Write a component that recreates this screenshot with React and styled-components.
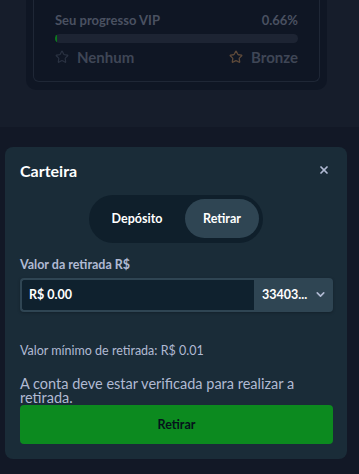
import React from 'react';
import styled, { createGlobalStyle } from 'styled-components';
import { Star, X, ChevronDown } from 'lucide-react';

const GlobalStyle = createGlobalStyle`
  html, body {
    margin: 0;
    padding: 0;
    background: #121826;
  }
  * {
    box-sizing: border-box;
  }
  body {
    font-family: Lato, "Noto Sans", sans-serif;
  }
`;

const Page = styled.div`
  width: 359px;
  height: 474px;
  overflow: hidden;
  position: relative;
  background: #121826;
`;

const TopArea = styled.div`
  height: 127px;
  background: #161d2b;
  padding-left: 26px;
`;

const VipCard = styled.div`
  width: 301px;
  background: #0f1624;
  border-radius: 0 0 10px 10px;
  padding: 0 7px 8px;
`;

const VipInner = styled.div`
  border: 1px solid #1f2736;
  border-top: none;
  border-radius: 0 0 6px 6px;
  padding: 13px 21px 15px;
  display: flex;
  flex-direction: column;
`;

const VipRow = styled.div`
  display: flex;
  justify-content: space-between;
  align-items: center;
  font-weight: 700;
  color: #4a5161;
  font-size: ${(p) => (p.big ? '15px' : '13px')};
  line-height: ${(p) => (p.big ? '18px' : '14px')};
`;

const Tier = styled.span`
  display: flex;
  align-items: center;
  gap: 8px;
  color: #3f4656;
`;

const Bar = styled.div`
  height: 9px;
  border-radius: 5px;
  background: #1d2433;
  margin: 7px 0 5px;
  overflow: hidden;
`;

const BarFill = styled.div`
  height: 100%;
  background: #0b7a1c;
`;

const Modal = styled.div`
  margin: 20px 0 0 5px;
  width: 342px;
  height: 312px;
  background: #1a2c38;
  border-radius: 8px;
  padding: 14px 14px 15px 15px;
  display: flex;
  flex-direction: column;
`;

const Header = styled.div`
  display: flex;
  justify-content: space-between;
  align-items: center;
  height: 18px;
`;

const Title = styled.h2`
  margin: 0;
  font-size: 16px;
  font-weight: 700;
  color: #ffffff;
`;

const Close = styled.button`
  background: none;
  border: none;
  padding: 0;
  margin-right: 3px;
  color: #b1bad3;
  display: flex;
`;

const Toggle = styled.div`
  align-self: center;
  margin: 16px 0 0 -1px;
  height: 48px;
  padding: 4px;
  gap: 4px;
  display: flex;
  align-items: center;
  background: #0f1f2b;
  border-radius: 24px;
`;

const Tab = styled.button`
  height: 39px;
  width: ${(p) => p.w}px;
  border: none;
  border-radius: 20px;
  background: ${(p) => (p.active ? '#2f4553' : 'transparent')};
  color: #ffffff;
  font-family: inherit;
  font-weight: 700;
  font-size: 12.5px;
`;

const Label = styled.div`
  margin-top: 14px;
  font-size: 12.5px;
  line-height: 16px;
  font-weight: 700;
  color: #b1bad3;
`;

const InputRow = styled.div`
  margin-top: 5px;
  display: flex;
  height: 35px;
  border-radius: 4px;
  box-shadow: 0 1px 3px rgba(0, 0, 0, 0.25);
`;

const AmountInput = styled.div`
  width: 234px;
  background: #0f212e;
  border: 2px solid #2f4553;
  border-right: none;
  border-radius: 4px 0 0 4px;
  padding-left: 7px;
  display: flex;
  align-items: center;
  color: #ffffff;
  font-weight: 700;
  font-size: 12.5px;
`;

const Select = styled.div`
  flex: 1;
  background: #2f4553;
  border-radius: 0 4px 4px 0;
  padding: 0 6px 0 8px;
  display: flex;
  align-items: center;
  justify-content: space-between;
  color: #ffffff;
  font-weight: 700;
  font-size: 12.5px;
  svg {
    color: #b1bad3;
  }
`;

const Note = styled.div`
  margin-top: ${(p) => p.mt}px;
  color: #b1bad3;
  font-size: ${(p) => p.size}px;
  line-height: ${(p) => p.lh}px;
`;

const Submit = styled.button`
  margin-top: 0;
  height: 39px;
  border: none;
  border-radius: 4px;
  background: #0c8a1f;
  color: #05121b;
  font-family: inherit;
  font-weight: 700;
  font-size: 12.5px;
`;

export default function App() {
  return (
    <Page>
      <GlobalStyle />
      <TopArea>
        <VipCard>
          <VipInner>
            <VipRow>
              <span>Seu progresso VIP</span>
              <span>0.66%</span>
            </VipRow>
            <Bar>
              <BarFill style={{ width: '0.66%' }} />
            </Bar>
            <VipRow big>
              <Tier>
                <Star size={14} strokeWidth={2} color="#2a3242" />
                Nenhum
              </Tier>
              <Tier>
                <Star size={14} strokeWidth={2.2} color="#5e4a3a" />
                Bronze
              </Tier>
            </VipRow>
          </VipInner>
        </VipCard>
      </TopArea>
      <Modal>
        <Header>
          <Title>Carteira</Title>
          <Close>
            <X size={12} strokeWidth={3.5} />
          </Close>
        </Header>
        <Toggle>
          <Tab w={88}>Depósito</Tab>
          <Tab w={74} active>
            Retirar
          </Tab>
        </Toggle>
        <Label>Valor da retirada R$</Label>
        <InputRow>
          <AmountInput>R$ 0.00</AmountInput>
          <Select>
            <span>33403...</span>
            <ChevronDown size={13} strokeWidth={3} />
          </Select>
        </InputRow>
        <Note mt={31} size={12.5} lh={16}>
          Valor mínimo de retirada: R$ 0.01
        </Note>
        <Note mt={18} size={14.5} lh={14}>
          A conta deve estar verificada para realizar a retirada.
        </Note>
        <Submit>Retirar</Submit>
      </Modal>
    </Page>
  );
}
